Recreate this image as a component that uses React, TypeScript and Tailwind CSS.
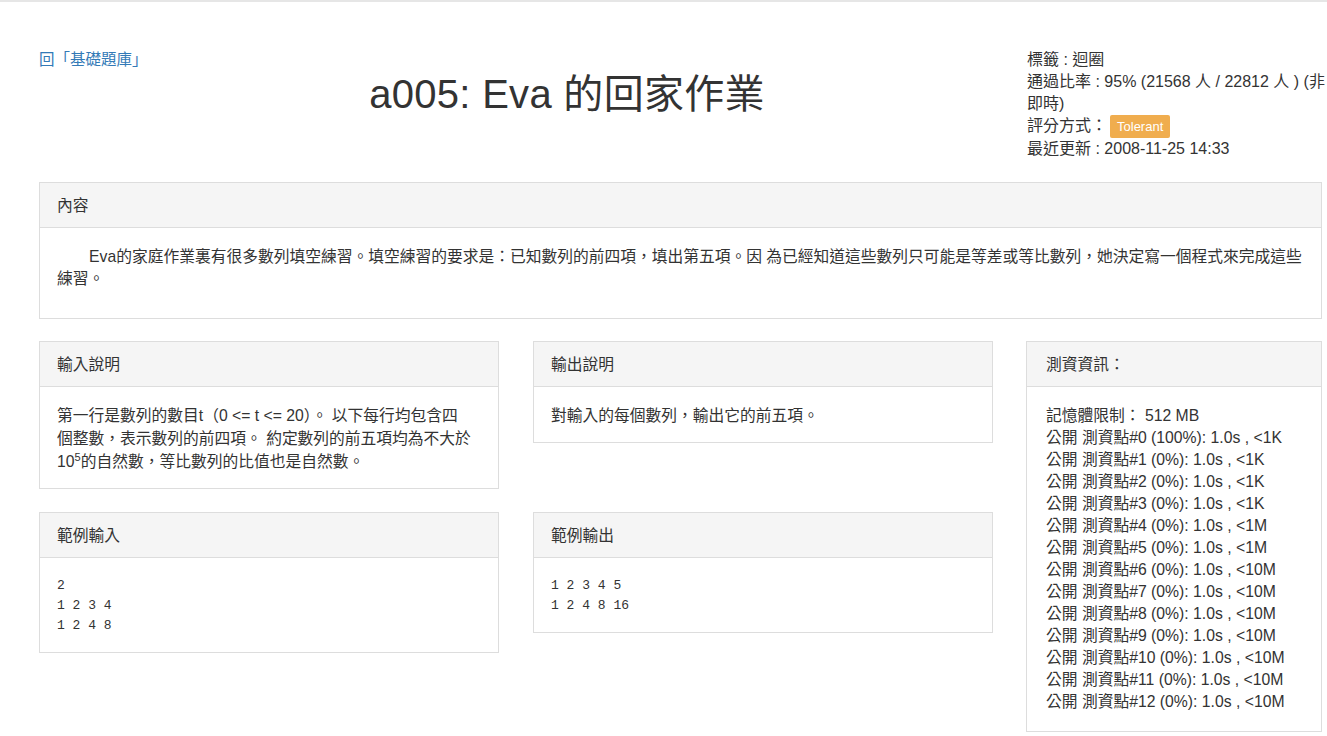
import React from 'react';

const tests = [
  { id: 0, pct: '100%', mem: '<1K' },
  { id: 1, pct: '0%', mem: '<1K' },
  { id: 2, pct: '0%', mem: '<1K' },
  { id: 3, pct: '0%', mem: '<1K' },
  { id: 4, pct: '0%', mem: '<1M' },
  { id: 5, pct: '0%', mem: '<1M' },
  { id: 6, pct: '0%', mem: '<10M' },
  { id: 7, pct: '0%', mem: '<10M' },
  { id: 8, pct: '0%', mem: '<10M' },
  { id: 9, pct: '0%', mem: '<10M' },
  { id: 10, pct: '0%', mem: '<10M' },
  { id: 11, pct: '0%', mem: '<10M' },
  { id: 12, pct: '0%', mem: '<10M' },
];

const Panel = ({
  title,
  padX = 'px-[17px]',
  children,
}: {
  title: string;
  padX?: string;
  children: React.ReactNode;
}) => (
  <div className="border border-[#dddddd] bg-white">
    <div className={`h-[45px] pt-[2px] flex items-center bg-[#f5f5f5] border-b border-[#dddddd] ${padX}`}>
      {title}
    </div>
    {children}
  </div>
);

const App = () => {
  return (
    <div className="min-h-screen bg-white border-t-2 border-[#e6e6e6] text-[16px] text-[#333333] font-['Liberation_Sans','Noto_Sans_CJK_TC',sans-serif]">
      {/* Header */}
      <div className="flex items-start pl-[39px] pt-[47px]">
        <div className="w-[103px] leading-[22px] whitespace-nowrap">
          <a href="#" className="text-[#337ab7] text-[15.5px]">回「基礎題庫」</a>
        </div>
        <h1 className="w-[850px] mt-[23px] text-center text-[40px] leading-[44px] font-normal tracking-[0.3px]">
          a005: Eva 的回家作業
        </h1>
        <div className="ml-[35px] w-[300px] leading-[22px]">
          <div>標籤 : 迴圈</div>
          <div>通過比率 : 95% (21568 人 / 22812 人 ) (非即時)</div>
          <div>
            評分方式：
            <span className="inline-block align-middle bg-[#f0ad4e] text-white text-[13px] leading-[19px] px-[7px] py-[2px] rounded-[2px] ml-[3px]">
              Tolerant
            </span>
          </div>
          <div>最近更新 : 2008-11-25 14:33</div>
        </div>
      </div>

      <div className="pl-[39px] pr-[5px] pt-[22px] pb-[10px] text-[15.75px]">
        {/* 內容 */}
        <Panel title="內容">
          <div className="pl-[17px] pr-[10px] pt-[18px] pb-[28px] leading-[22px] indent-[32px]">
            Eva的家庭作業裏有很多數列填空練習。填空練習的要求是：已知數列的前四項，填出第五項。因 為已經知道這些數列只可能是等差或等比數列，她決定寫一個程式來完成這些練習。
          </div>
        </Panel>

        <div className="mt-[22px] grid grid-cols-[954px_1fr] gap-x-[33px] items-start">
          <div className="grid grid-cols-[460px_460px] gap-x-[34px] gap-y-[23px] items-start">
            <Panel title="輸入說明">
              <div className="px-[17px] pt-[17px] pb-[15px] leading-[23px]">
                第一行是數列的數目t（0 &lt;= t &lt;= 20）。 以下每行均包含四
                <br />
                個整數，表示數列的前四項。 約定數列的前五項均為不大於
                <br />
                10<sup className="text-[11px] leading-none relative top-[-6px]">5</sup>的自然數，等比數列的比值也是自然數。
              </div>
            </Panel>

            <Panel title="輸出說明">
              <div className="px-[17px] pt-[17px] pb-[15px] leading-[23px]">
                對輸入的每個數列，輸出它的前五項。
              </div>
            </Panel>

            <Panel title="範例輸入">
              <pre className="px-[17px] pt-[18px] pb-[16px] font-['Liberation_Mono',monospace] text-[13px] leading-[20px] text-[#333333]">
{`2
1 2 3 4
1 2 4 8`}
              </pre>
            </Panel>

            <Panel title="範例輸出">
              <pre className="px-[17px] pt-[18px] pb-[16px] font-['Liberation_Mono',monospace] text-[13px] leading-[20px] text-[#333333]">
{`1 2 3 4 5
1 2 4 8 16`}
              </pre>
            </Panel>
          </div>

          <Panel title="測資資訊：" padX="px-[19px]">
            <div className="px-[19px] pt-[18px] pb-[18px] leading-[22px]">
              <div>記憶體限制： 512 MB</div>
              {tests.map((t) => (
                <div key={t.id} className="whitespace-nowrap">
                  公開 測資點#{t.id} ({t.pct}): 1.0s , {t.mem}
                </div>
              ))}
            </div>
          </Panel>
        </div>
      </div>
    </div>
  );
};

export default App;
